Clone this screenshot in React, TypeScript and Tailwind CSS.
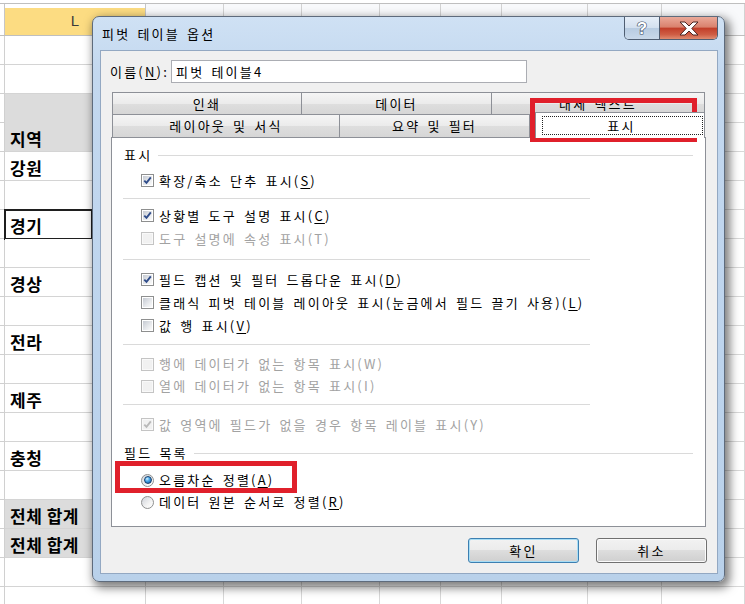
import React from "react";

const KR = "font-['Noto_Sans_CJK_KR','Noto_Sans',sans-serif]";
const LIB = "font-['Liberation_Sans',sans-serif]";
const TAB = "bg-[linear-gradient(#f5f5f5,#ebebeb_50%,#dedede_51%,#d6d6d6)]";

function U({ children }: { children: React.ReactNode }) {
  return <span className="underline decoration-1 underline-offset-[2px]">{children}</span>;
}

function CheckBox({ checked, disabled }: { checked?: boolean; disabled?: boolean }) {
  return (
    <span
      className={
        disabled
          ? "block w-[13px] h-[13px] shrink-0 border border-[#c4c4c4] bg-[#f9f9f9] p-[1px]"
          : "block w-[13px] h-[13px] shrink-0 border border-[#8e8f8f] bg-white p-[1px]"
      }
    >
      <span
        className={
          disabled
            ? "relative block w-full h-full bg-[#f1f1f1]"
            : "relative block w-full h-full bg-[linear-gradient(135deg,#c5cad2,#e8eaed_60%,#fbfbfb)]"
        }
      >
        {checked && (
          <svg viewBox="0 0 9 9" className="absolute inset-0 w-[9px] h-[9px]">
            <path
              d="M1.3 4.6 L3.5 6.9 L7.8 1.4"
              fill="none"
              stroke={disabled ? "#b9b9b9" : "#2f4c8a"}
              strokeWidth="1.9"
            />
          </svg>
        )}
      </span>
    </span>
  );
}

function Radio({ checked }: { checked?: boolean }) {
  return (
    <span className="flex w-[13px] h-[13px] shrink-0 items-center justify-center rounded-full border border-[#8e8f8f] bg-[linear-gradient(135deg,#cfd3da,#f3f3f3_60%,#ffffff)]">
      {checked && (
        <span className="block w-[8px] h-[8px] rounded-full border border-[#163f6e] bg-[radial-gradient(circle_at_35%_30%,#d2f0ff_0%,#4aaaeb_40%,#0d4f96_100%)]" />
      )}
    </span>
  );
}

function Row({
  children,
  checked,
  disabled,
  className,
}: {
  children: React.ReactNode;
  checked?: boolean;
  disabled?: boolean;
  className: string;
}) {
  return (
    <div className={className}>
      <CheckBox checked={checked} disabled={disabled} />
      <span className={disabled ? "ml-[5px] text-[#a2a2a2]" : "ml-[5px] text-black"}>{children}</span>
    </div>
  );
}

const colWidths = [78, 78, 78, 61, 61, 86, 74, 83];

type RowData = { text?: string; gray?: boolean; noLine?: boolean; selected?: boolean };

const rows: RowData[] = [
  {},
  {},
  { gray: true, noLine: true },
  { gray: true, text: "지역" },
  { text: "강원" },
  {},
  { text: "경기", selected: true },
  {},
  { text: "경상" },
  {},
  { text: "전라" },
  {},
  { text: "제주" },
  {},
  { text: "충청" },
  {},
  { gray: true, text: "전체 합계" },
  { gray: true, text: "전체 합계" },
  {},
  {},
];

function Sheet() {
  return (
    <div className="flex flex-col">
      <div className="h-[3px] bg-white" />
      <div className="flex h-[33px] border-t border-b border-[#bfbfbf] bg-[#f8f9fb]">
        <div className="w-[5px] border-r border-[#c6c6c6] bg-white" />
        <div className="flex w-[141px] flex-col border-r border-[#c6c6c6] bg-white">
          <div className="h-[4px] shrink-0 bg-white" />
          <div className={"flex flex-1 items-center justify-center bg-[#fcdc82] text-[15px] text-[#3b3b3b] " + LIB}>
            L
          </div>
        </div>
        {colWidths.map((w, i) => (
          <div key={i} className="border-r border-[#d2d2d2]" style={{ width: w }} />
        ))}
      </div>
      {rows.map((r, i) => (
        <div key={i} className="flex h-[29px]">
          <div className="w-[5px] border-r border-b border-[#d0d0d0]" />
          <div
            className={
              (r.gray ? "bg-[#dcdcdc] " : "bg-white ") +
              (r.noLine ? "border-[#dcdcdc] " : "border-[#d4d4d4] ") +
              "relative flex w-[141px] items-center border-b border-r pl-[5px] pt-[3px] text-[17px] font-bold text-black tracking-[0.5px] " +
              KR
            }
          >
            {r.text}
            {r.selected && <div className="absolute -left-[1px] -top-[1px] w-[89px] h-[31px] border-2 border-[#1f1f1f]" />}
          </div>
          {colWidths.map((w, j) => (
            <div key={j} className="border-b border-r border-[#d8d8d8]" style={{ width: w }} />
          ))}
        </div>
      ))}
    </div>
  );
}

function Dialog() {
  return (
    <div className="absolute left-[92px] top-[16px] flex h-[566px] w-[633px] flex-col rounded-[7px] border border-[#5e6b7c] bg-[linear-gradient(#cfe1f4,#c3d8ef_10%,#bdd4ed_60%,#b9d1ea)] shadow-[3px_4px_10px_2px_rgba(0,0,0,0.5)]">
      {/* title bar */}
      <div className="flex h-[33px] items-start">
        <div className={"pl-[9px] pt-[8px] text-[13px] leading-[18px] tracking-[2.2px] [word-spacing:2px] text-black " + KR}>피벗 테이블 옵션</div>
        <div className="ml-auto mr-[6px] flex h-[23px] overflow-hidden rounded-b-[5px] border border-t-0 border-[#4f5e72]">
          <div className="flex w-[35px] items-center justify-center border-r border-[#4f5e72] bg-[linear-gradient(#e6eef8,#d3e0ef_48%,#b7cbe1_50%,#c9d9ea)]">
            <svg width="16" height="18" viewBox="0 0 16 18">
              <text
                x="8"
                y="15"
                textAnchor="middle"
                fontSize="17"
                fontWeight="bold"
                fontFamily="Liberation Sans, sans-serif"
                fill="#ffffff"
                stroke="#3a4b63"
                strokeWidth="1.2"
                paintOrder="stroke"
              >
                ?
              </text>
            </svg>
          </div>
          <div className="flex w-[57px] items-center justify-center bg-[linear-gradient(#eaa999,#da826e_45%,#c23f2a_52%,#cf5e45_80%,#e08c70)]">
            <svg width="22" height="15" viewBox="0 0 22 15">
              <path
                d="M2 1 H7 L11 5 L15 1 H20 L13.8 7.5 L20 14 H15 L11 10 L7 14 H2 L8.2 7.5 Z"
                fill="#ffffff"
                stroke="#4a2420"
                strokeWidth="1"
                strokeLinejoin="round"
              />
            </svg>
          </div>
        </div>
      </div>

      {/* client area */}
      <div className={"ml-[7px] flex h-[524px] w-[618px] flex-col border border-[#93a8c2] bg-[#f0f0f0] text-[13px] tracking-[2.2px] [word-spacing:2px] " + KR}>
        <div className="flex items-center pl-[9px] pt-[9px]">
          <div className="w-[61px]">
            이름(<U>N</U>):
          </div>
          <div className="flex h-[23px] w-[356px] items-center border border-[#abadb3] bg-white pl-[4px]">피벗 테이블4</div>
        </div>

        <div className="ml-[10px] mt-[9px] w-[595px]">
          <div className="flex h-[22px] pl-[1px]">
            <div className={"flex w-[190px] items-center justify-center border-x border-t border-[#8d9097] " + TAB}>인쇄</div>
            <div className={"flex w-[190px] items-center justify-center border-r border-t border-[#8d9097] " + TAB}>데이터</div>
            <div className={"flex w-[213px] items-center justify-center border-r border-t border-[#8d9097] " + TAB}>대체 텍스트</div>
          </div>
          <div className="flex h-[23px] items-start pl-[1px]">
            <div className={"flex h-[23px] w-[228px] items-center justify-center border-x border-t border-[#8d9097] " + TAB}>레이아웃 및 서식</div>
            <div className={"flex h-[23px] w-[190px] items-center justify-center border-r border-t border-[#8d9097] " + TAB}>요약 및 필터</div>
            <div className="w-[5px]" />
            <div className="relative z-10 -mt-[2px] flex h-[26px] w-[170px] items-center justify-center border-x border-t border-[#8d9097] bg-white pl-[3px]">
              표시
              <div className="absolute left-[6px] right-[1px] top-[3px] bottom-[3px] border border-dotted border-[#222]" />
            </div>
          </div>
          <div className="flex h-[390px] w-[595px] flex-col border border-[#8d9097] bg-white px-[12px] pt-[8px]">
            <div className="flex h-[18px] items-center">
              <span>표시</span>
              <div className="ml-[6px] h-px flex-1 bg-[#dadada]" />
            </div>
            <Row checked className="ml-[17px] mt-[5px] flex h-[23px] items-center">
              확장/축소 단추 표시(<U>S</U>)
            </Row>
            <div className="-ml-[1px] mt-[6px] h-px w-[467px] bg-[#dadada]" />
            <Row checked className="ml-[17px] mt-[5px] flex h-[23px] items-center">
              상황별 도구 설명 표시(<U>C</U>)
            </Row>
            <Row disabled className="ml-[17px] flex h-[23px] items-center">
              도구 설명에 속성 표시(T)
            </Row>
            <div className="-ml-[1px] mt-[9px] h-px w-[467px] bg-[#dadada]" />
            <Row checked className="ml-[17px] mt-[8px] flex h-[23px] items-center">
              필드 캡션 및 필터 드롭다운 표시(<U>D</U>)
            </Row>
            <Row className="ml-[17px] flex h-[23px] items-center">
              클래식 피벗 테이블 레이아웃 표시(눈금에서 필드 끌기 사용)(<U>L</U>)
            </Row>
            <Row className="ml-[17px] flex h-[23px] items-center">
              값 행 표시(<U>V</U>)
            </Row>
            <div className="-ml-[1px] mt-[7px] h-px w-[467px] bg-[#dadada]" />
            <Row disabled className="ml-[17px] mt-[8px] flex h-[22px] items-center">
              행에 데이터가 없는 항목 표시(W)
            </Row>
            <Row disabled className="ml-[17px] flex h-[22px] items-center">
              열에 데이터가 없는 항목 표시(I)
            </Row>
            <div className="-ml-[1px] mt-[7px] h-px w-[467px] bg-[#dadada]" />
            <Row checked disabled className="ml-[17px] mt-[8px] flex h-[23px] items-center">
              값 영역에 필드가 없을 경우 항목 레이블 표시(Y)
            </Row>
            <div className="mt-[8px] flex h-[18px] items-center">
              <span>필드 목록</span>
              <div className="ml-[6px] h-px flex-1 bg-[#dadada]" />
            </div>
            <div className="ml-[17px] mt-[7px] flex h-[22px] items-center">
              <Radio checked />
              <span className="ml-[5px]">
                오름차순 정렬(<U>A</U>)
              </span>
            </div>
            <div className="ml-[17px] flex h-[22px] items-center">
              <Radio />
              <span className="ml-[5px]">
                데이터 원본 순서로 정렬(<U>R</U>)
              </span>
            </div>
          </div>
        </div>

        <div className="mt-[11px] flex justify-end gap-[17px] pr-[10px]">
          <div className="flex h-[25px] w-[111px] items-center justify-center rounded-[3px] border border-[#3c7fb1] bg-[linear-gradient(#f2f2f2,#ebebeb_50%,#dddddd_50%,#cfcfcf)] shadow-[inset_0_0_0_1px_#a7ddf5]">
            확인
          </div>
          <div className="flex h-[25px] w-[111px] items-center justify-center rounded-[3px] border border-[#707070] bg-[linear-gradient(#f2f2f2,#ebebeb_50%,#dddddd_50%,#cfcfcf)] shadow-[inset_0_0_0_1px_#fbfbfb]">
            취소
          </div>
        </div>
      </div>
    </div>
  );
}

export default function App() {
  return (
    <div className="relative h-[604px] w-[745px] overflow-hidden bg-white">
      <Sheet />
      <Dialog />
      <div className="absolute left-[530px] top-[98px] h-[44px] w-[167px] border-[5px] border-[#e0202b]" />
      <div className="absolute left-[115px] top-[461px] h-[32px] w-[182px] border-[5px] border-[#e0202b]" />
    </div>
  );
}
